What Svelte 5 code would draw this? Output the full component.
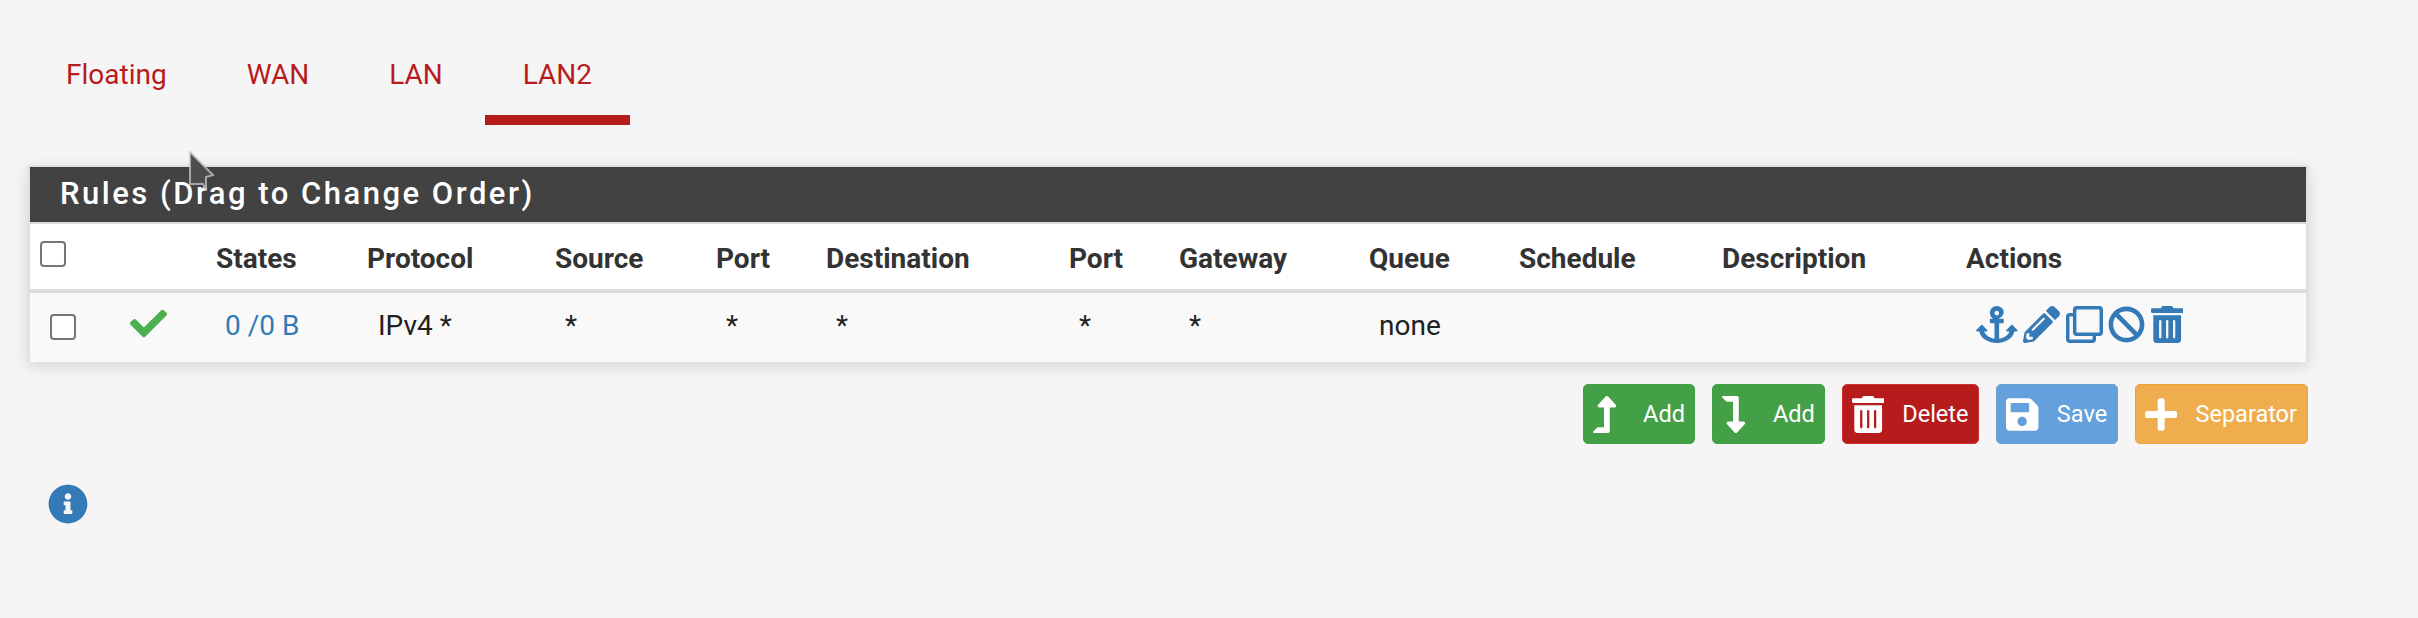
<script>
  const icons = {
    check: ['0 0 512 512', 'M173.898 439.404l-166.400-166.400c-9.997-9.997-9.997-26.206 0-36.204l36.203-36.204c9.997-9.998 26.207-9.998 36.204 0L192 312.690 432.095 72.596c9.997-9.997 26.207-9.997 36.204 0l36.203 36.204c9.997 9.997 9.997 26.206 0 36.204l-294.400 294.401c-9.998 9.997-26.207 9.997-36.204-.001z'],
    anchor: ['0 0 576 512', 'M12.971 352h32.394C67.172 454.735 181.944 512 288 512c106.229 0 220.853-57.380 242.635-160h32.394c10.691 0 16.045-12.926 8.485-20.485l-67.029-67.029c-4.686-4.686-12.284-4.686-16.971 0l-67.029 67.029c-7.560 7.560-2.206 20.485 8.485 20.485h35.146c-20.269 54.176-79.070 88.400-144.100 102.700V240h52c6.627 0 12-5.373 12-12v-40c0-6.627-5.373-12-12-12h-52v-5.470c37.281-13.178 63.995-48.725 64-90.518C384.005 43.772 341.605.738 289.370.01 235.723-.739 192 42.525 192 96c0 41.798 26.716 77.349 64 90.530V176h-52c-6.627 0-12 5.373-12 12v40c0 6.627 5.373 12 12 12h52v214.700C195.400 440.400 132.200 406.200 111.900 352h35.146c10.691 0 16.045-12.926 8.485-20.485l-67.029-67.029c-4.686-4.686-12.284-4.686-16.971 0L4.485 331.515C-3.074 339.074 2.280 352 12.971 352zM288 64c17.645 0 32 14.355 32 32s-14.355 32-32 32-32-14.355-32-32 14.355-32 32-32z'],
    pencil: ['0 0 512 512', 'M497.900 142.100l-46.100 46.100c-4.700 4.700-12.300 4.700-17 0l-111-111c-4.700-4.700-4.700-12.300 0-17l46.100-46.100c18.700-18.700 49.100-18.700 67.900 0l60.100 60.100c18.800 18.700 18.800 49.100 0 67.900zM284.200 99.800L21.600 362.400.4 483.900c-2.900 16.400 11.400 30.600 27.800 27.800l121.500-21.300 262.600-262.600c4.700-4.700 4.700-12.300 0-17l-111-111c-4.800-4.700-12.400-4.700-17.100 0zM124.100 339.900c-5.500-5.500-5.500-14.300 0-19.800l154-154c5.500-5.500 14.300-5.500 19.800 0s5.500 14.300 0 19.800l-154 154c-5.500 5.500-14.300 5.500-19.800 0zM88 424h48v36.300l-64.500 11.300-31.100-31.100L51.700 376H88v48z'],
    clone: ['0 0 512 512', 'M464 0H144c-26.510 0-48 21.490-48 48v48H48c-26.510 0-48 21.490-48 48v320c0 26.510 21.490 48 48 48h320c26.510 0 48-21.490 48-48v-48h48c26.510 0 48-21.490 48-48V48c0-26.510-21.490-48-48-48zM362 464H54a6 6 0 0 1-6-6V150a6 6 0 0 1 6-6h42v224c0 26.510 21.490 48 48 48h224v42a6 6 0 0 1-6 6zm96-96H150a6 6 0 0 1-6-6V54a6 6 0 0 1 6-6h308a6 6 0 0 1 6 6v308a6 6 0 0 1-6 6z'],
    ban: ['0 0 512 512', 'M256 8C119.034 8 8 119.033 8 256s111.034 248 248 248 248-111.034 248-248S392.967 8 256 8zm130.108 117.892c65.448 65.448 70 165.481 20.677 235.637L150.470 105.216c70.204-49.356 170.226-44.735 235.638 20.676zM125.892 386.108c-65.448-65.448-70-165.481-20.677-235.637L361.530 406.784c-70.203 49.356-170.226 44.736-235.638-20.676z'],
    trash: ['0 0 448 512', 'M32 464a48 48 0 0 0 48 48h288a48 48 0 0 0 48-48V128H32zm272-256a16 16 0 0 1 32 0v224a16 16 0 0 1-32 0zm-96 0a16 16 0 0 1 32 0v224a16 16 0 0 1-32 0zm-96 0a16 16 0 0 1 32 0v224a16 16 0 0 1-32 0zM432 32H312l-9.400-18.700A24 24 0 0 0 281.100 0H166.800a23.720 23.720 0 0 0-21.400 13.300L136 32H16A16 16 0 0 0 0 48v32a16 16 0 0 0 16 16h416a16 16 0 0 0 16-16V48a16 16 0 0 0-16-16z'],
    up: ['0 0 320 512', 'M313.553 119.669L209.587 7.666c-9.485-10.214-25.676-10.229-35.174 0L70.438 119.669C56.232 134.969 67.062 160 88.025 160H152v272H68.024a11.996 11.996 0 0 0-8.485 3.515l-56 56C-4.021 499.074 1.333 512 12.024 512H208c13.255 0 24-10.745 24-24V160h63.966c20.878 0 31.851-24.969 17.587-40.331z'],
    down: ['0 0 320 512', 'M313.553 392.331L209.587 504.334c-9.485 10.214-25.676 10.229-35.174 0L70.438 392.331C56.232 377.031 67.062 352 88.025 352H152V80H68.024a11.996 11.996 0 0 1-8.485-3.515l-56-56C-4.021 12.926 1.333 0 12.024 0H208c13.255 0 24 10.745 24 24v328h63.966c20.878 0 31.851 24.969 17.587 40.331z'],
    save: ['0 0 448 512', 'M433.941 129.941l-83.882-83.882A48 48 0 0 0 316.118 32H48C21.490 32 0 53.490 0 80v352c0 26.510 21.490 48 48 48h352c26.510 0 48-21.490 48-48V163.882a48 48 0 0 0-14.059-33.941zM224 416c-35.346 0-64-28.654-64-64 0-35.346 28.654-64 64-64s64 28.654 64 64c0 35.346-28.654 64-64 64zm96-304.520V212c0 6.627-5.373 12-12 12H76c-6.627 0-12-5.373-12-12V108c0-6.627 5.373-12 12-12h228.520c3.183 0 6.235 1.264 8.485 3.515l3.480 3.480A11.996 11.996 0 0 1 320 111.480z'],
    plus: ['0 0 448 512', 'M416 208H272V64c0-17.670-14.330-32-32-32h-32c-17.670 0-32 14.330-32 32v144H32c-17.670 0-32 14.330-32 32v32c0 17.670 14.330 32 32 32h144v144c0 17.670 14.330 32 32 32h32c17.670 0 32-14.330 32-32V304h144c17.670 0 32-14.330 32-32v-32c0-17.670-14.330-32-32-32z'],
    info: ['0 0 512 512', 'M256 8C119.043 8 8 119.083 8 256c0 136.997 111.043 248 248 248s248-111.003 248-248C504 119.083 392.957 8 256 8zm0 110c23.196 0 42 18.804 42 42s-18.804 42-42 42-42-18.804-42-42 18.804-42 42-42zm56 254c0 6.627-5.373 12-12 12h-88c-6.627 0-12-5.373-12-12v-24c0-6.627 5.373-12 12-12h12v-64h-12c-6.627 0-12-5.373-12-12v-24c0-6.627 5.373-12 12-12h64c6.627 0 12 5.373 12 12v100h12c6.627 0 12 5.373 12 12v24z']
  };
  const tabs = ['Floating', 'WAN', 'LAN', 'LAN2'];
  const headers = ['States', 'Protocol', 'Source', 'Port', 'Destination', 'Port', 'Gateway', 'Queue', 'Schedule', 'Description', 'Actions'];
  const colNames = ['c1', 'c2', 'c3', 'c4', 'c5', 'c6', 'c7', 'c8', 'c9', 'c10', 'c11', 'c12', 'c13'];
  const actions = ['anchor', 'pencil', 'clone', 'ban', 'trash'];
  const buttons = [
    { icon: 'up', label: 'Add', cls: 'green wide first' },
    { icon: 'down', label: 'Add', cls: 'green wide' },
    { icon: 'trash', label: 'Delete', cls: 'red' },
    { icon: 'save', label: 'Save', cls: 'blue' },
    { icon: 'plus', label: 'Separator', cls: 'orange' }
  ];
</script>

{#snippet icon(name)}
  <svg class="ico" viewBox={icons[name][0]} aria-hidden="true"><path fill="currentColor" d={icons[name][1]} /></svg>
{/snippet}

<main class="page">
  <ul class="tabs">
    {#each tabs as t, i}
      <li class:active={i === 3}><span>{t}</span></li>
    {/each}
  </ul>

  <section class="panel">
    <h2>Rules (Drag to Change Order)</h2>
    <table>
      <colgroup>
        {#each colNames as c}<col class={c} />{/each}
      </colgroup>
      <thead>
        <tr>
          <th><input type="checkbox" /></th>
          <th></th>
          {#each headers as h}<th>{h}</th>{/each}
        </tr>
      </thead>
      <tbody>
        <tr>
          <td><input type="checkbox" /></td>
          <td class="status">{@render icon('check')}</td>
          <td class="link">0 /0 B</td>
          <td>IPv4 *</td>
          <td>*</td>
          <td>*</td>
          <td>*</td>
          <td>*</td>
          <td>*</td>
          <td>none</td>
          <td></td>
          <td></td>
          <td class="actions">
            <div class="action-row">
              {#each actions as a}{@render icon(a)}{/each}
            </div>
          </td>
        </tr>
      </tbody>
    </table>
  </section>

  <div class="buttons">
    {#each buttons as b}
      <button class={b.cls}>{@render icon(b.icon)}<span>{b.label}</span></button>
    {/each}
  </div>

  <div class="info">{@render icon('info')}</div>

  <svg class="cursor" viewBox="0 0 28 42" aria-hidden="true">
    <path d="M1 1 L24 24 L17 26 L17 39 L14 33 L1 33 Z" fill="#4d4d4d" stroke="#c8c8c8" stroke-opacity=".75" stroke-width="2" />
  </svg>
</main>

<style>
  :global(body) {
    margin: 0;
    background: #f5f5f5;
  }
  .page {
    position: relative;
    width: 2418px;
    height: 618px;
    box-sizing: border-box;
    padding: 40px 110px 0 28px;
    font-family: Roboto, sans-serif;
    font-size: 28px;
    color: #212121;
    overflow: hidden;
  }
  .tabs {
    display: flex;
    gap: 4px;
    list-style: none;
    margin: 0 0 40px;
    padding: 0;
    height: 85px;
    box-sizing: border-box;
  }
  .tabs li {
    box-sizing: border-box;
    height: 85px;
    padding: 20px 38px 0;
    color: #b71c1c;
    line-height: 30px;
    font-size: 28px;
    border-bottom: 10px solid transparent;
  }
  .tabs li.active {
    border-bottom-color: #b71c1c;
  }
  .panel {
    border: 2px solid #e0e0e0;
    border-bottom: 0;
    background: #fff;
    box-shadow: 0 4px 14px rgba(0, 0, 0, 0.14);
  }
  h2 {
    margin: 0;
    height: 55px;
    padding-left: 30px;
    background: #424242;
    color: #fff;
    font-size: 31px;
    font-weight: 500;
    line-height: 54px;
    letter-spacing: 2.5px;
    border-bottom: 2px solid #ddd;
    box-sizing: content-box;
  }
  table {
    width: 2276px;
    table-layout: fixed;
    border-collapse: separate;
    border-spacing: 0;
  }
  .c1 { width: 80px; }
  .c2 { width: 96px; }
  .c3 { width: 151px; }
  .c4 { width: 188px; }
  .c5 { width: 161px; }
  .c6 { width: 110px; }
  .c7 { width: 243px; }
  .c8 { width: 110px; }
  .c9 { width: 190px; }
  .c10 { width: 150px; }
  .c11 { width: 203px; }
  .c12 { width: 244px; }
  .c13 { width: 350px; }
  th {
    height: 69px;
    padding: 3px 10px 0;
    text-align: left;
    font-weight: 700;
    font-size: 28px;
    border-bottom: 4px solid #ddd;
    box-sizing: border-box;
    color: #333;
  }
  td {
    height: 69px;
    padding: 0 20px 5px;
    background: #f9f9f9;
    font-size: 28px;
    white-space: nowrap;
    box-sizing: border-box;
  }
  td:nth-child(3) {
    padding-left: 19px;
  }
  td:nth-child(4) {
    padding-left: 21px;
  }
  input[type='checkbox'] {
    appearance: none;
    display: block;
    width: 26px;
    height: 26px;
    margin: 0;
    background: #fff;
    border: 2px solid #767676;
    border-radius: 4px;
    box-sizing: border-box;
  }
  th input[type='checkbox'] {
    position: relative;
    top: -4px;
  }
  td input[type='checkbox'] {
    position: relative;
    top: 2px;
  }
  .ico {
    display: block;
    height: 37px;
    flex: none;
  }
  .status {
    color: #4caf50;
  }
  .status .ico {
    height: 37px;
    position: relative;
    top: -2px;
  }
  .link {
    color: #337ab7;
  }
  .action-row {
    display: flex;
    gap: 5.6px;
    color: #337ab7;
    position: relative;
    top: -1px;
  }
  .buttons {
    display: flex;
    justify-content: flex-end;
    gap: 17px;
    margin: 22px 0 0;
  }
  button {
    display: flex;
    align-items: center;
    height: 60px;
    padding: 0 10px 0 9px;
    border: 1px solid;
    border-radius: 5px;
    color: #fff;
    font-family: inherit;
    font-size: 23.5px;
  }
  button .ico {
    margin-right: 18px;
  }
  button.wide {
    padding-right: 9px;
  }
  button.wide .ico {
    margin-right: 28px;
  }
  button.first .ico {
    margin-right: 27px;
  }
  .green { background: #43a047; border-color: #43a047; }
  .red { background: #b71c1c; border-color: #d32f2f; }
  .blue { background: #64a0dc; border-color: #6fa0cf; }
  .orange { background: #f0ad4e; border-color: #eea236; }
  .info {
    color: #337ab7;
    margin: 40px 0 0 20px;
  }
  .info .ico {
    height: 40px;
  }
  .cursor {
    position: absolute;
    left: 189px;
    top: 151px;
    width: 28px;
    height: 42px;
  }
</style>
